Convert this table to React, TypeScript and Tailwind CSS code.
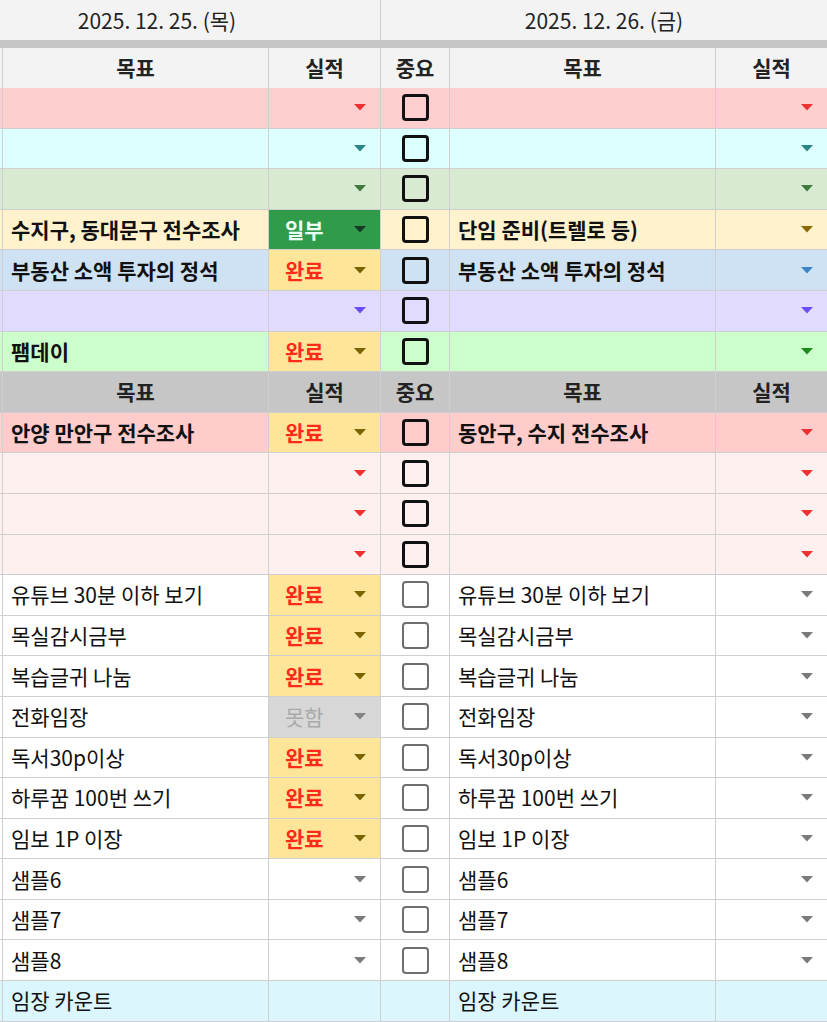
import React from "react";

type Status = "" | "완료" | "일부" | "못함";

type Row = {
  bg: string;
  arrow: string;
  bold?: boolean;
  box?: "dark" | "light" | "none";
  left: string;
  leftStatus?: Status;
  right: string;
  noArrow?: boolean;
};

const top: Row[] = [
  { bg: "bg-[#ffcfcf]", arrow: "text-[#ee3030]", bold: true, box: "dark", left: "", right: "" },
  { bg: "bg-[#dcffff]", arrow: "text-[#2d8686]", bold: true, box: "dark", left: "", right: "" },
  { bg: "bg-[#d9ead3]", arrow: "text-[#3f7a3f]", bold: true, box: "dark", left: "", right: "" },
  {
    bg: "bg-[#fff2cc]",
    arrow: "text-[#8a6a00]",
    bold: true,
    box: "dark",
    left: "수지구, 동대문구 전수조사",
    leftStatus: "일부",
    right: "단임 준비(트렐로 등)",
  },
  {
    bg: "bg-[#cfe2f3]",
    arrow: "text-[#3d85c6]",
    bold: true,
    box: "dark",
    left: "부동산 소액 투자의 정석",
    leftStatus: "완료",
    right: "부동산 소액 투자의 정석",
  },
  { bg: "bg-[#e1dcff]", arrow: "text-[#6a4fff]", bold: true, box: "dark", left: "", right: "" },
  {
    bg: "bg-[#ccffcc]",
    arrow: "text-[#1e8a1e]",
    bold: true,
    box: "dark",
    left: "팸데이",
    leftStatus: "완료",
    right: "",
  },
];

const middle: Row[] = [
  {
    bg: "bg-[#ffcccc]",
    arrow: "text-[#ee3030]",
    bold: true,
    box: "dark",
    left: "안양 만안구 전수조사",
    leftStatus: "완료",
    right: "동안구, 수지 전수조사",
  },
  { bg: "bg-[#fff0f0]", arrow: "text-[#ee3030]", bold: true, box: "dark", left: "", right: "" },
  { bg: "bg-[#fff0f0]", arrow: "text-[#ee3030]", bold: true, box: "dark", left: "", right: "" },
  { bg: "bg-[#fff0f0]", arrow: "text-[#ee3030]", bold: true, box: "dark", left: "", right: "" },
];

const habits: [string, Status][] = [
  ["유튜브 30분 이하 보기", "완료"],
  ["목실감시금부", "완료"],
  ["복습글귀 나눔", "완료"],
  ["전화임장", "못함"],
  ["독서30p이상", "완료"],
  ["하루꿈 100번 쓰기", "완료"],
  ["임보 1P 이장", "완료"],
  ["샘플6", ""],
  ["샘플7", ""],
  ["샘플8", ""],
];

const bottom: Row[] = [
  ...habits.map(
    ([t, s]): Row => ({
      bg: "bg-white",
      arrow: "text-[#7a7a7a]",
      box: "light",
      left: t,
      leftStatus: s,
      right: t,
    })
  ),
  {
    bg: "bg-[#dcf6fd]",
    arrow: "",
    box: "none",
    left: "임장 카운트",
    right: "임장 카운트",
    noArrow: true,
  },
];

const cell = "h-full shrink-0 border-r border-b border-[#cfcfcf] flex items-center";

const Arrow = ({ color }: { color: string }) => (
  <svg width="12" height="7" viewBox="0 0 12 7" className={`ml-auto mr-[14px] ${color}`}>
    <path d="M0 0 H12 L6 6.5 Z" fill="currentColor" />
  </svg>
);

const Box = ({ kind }: { kind: Row["box"] }) => {
  if (kind === "none") return null;
  return kind === "dark" ? (
    <div className="h-[27px] w-[27px] rounded-[4px] border-[3px] border-[#111]" />
  ) : (
    <div className="h-[27px] w-[27px] rounded-[4px] border-[2.5px] border-[#6e6e6e]" />
  );
};

const StatusCell = ({ status, row }: { status?: Status; row: Row }) => {
  if (status === "완료")
    return (
      <div className={`${cell} w-[112px] bg-[#ffe599] pl-[16px]`}>
        <span className="font-bold text-[#ff2a1a]">완료</span>
        <Arrow color="text-[#7d6200]" />
      </div>
    );
  if (status === "일부")
    return (
      <div className={`${cell} w-[112px] bg-[#2f9b4b] pl-[16px]`}>
        <span className="font-bold text-[#ecfff4]">일부</span>
        <Arrow color="text-[#173a22]" />
      </div>
    );
  if (status === "못함")
    return (
      <div className={`${cell} w-[112px] bg-[#d7d7d7] pl-[16px]`}>
        <span className="text-[#a9a9a9]">못함</span>
        <Arrow color="text-[#838383]" />
      </div>
    );
  return (
    <div className={`${cell} w-[112px] ${row.bg}`}>
      {!row.noArrow && <Arrow color={row.arrow} />}
    </div>
  );
};

const DataRow = ({ row }: { row: Row }) => (
  <div className={`flex h-[40.6px] ${row.bold ? "font-bold" : ""}`}>
    {/* first day's 중요 column, scrolled mostly out of view */}
    <div className={`${cell} w-[69px] justify-center ${row.bg}`}>
      <Box kind={row.box} />
    </div>
    <div className={`${cell} w-[266px] pl-[8px] text-[#111] ${row.bg}`}>{row.left}</div>
    <StatusCell status={row.leftStatus} row={row} />
    <div className={`${cell} w-[69px] justify-center ${row.bg}`}>
      <Box kind={row.box} />
    </div>
    <div className={`${cell} w-[266px] pl-[8px] text-[#111] ${row.bg}`}>{row.right}</div>
    <StatusCell row={row} />
  </div>
);

const HeaderRow = ({ bg }: { bg: string }) => (
  <div className={`flex h-[40.6px] font-bold text-[#222] ${bg}`}>
    <div className={`${cell} w-[69px]`} />
    <div className={`${cell} w-[266px] justify-center`}>목표</div>
    <div className={`${cell} w-[112px] justify-center`}>실적</div>
    <div className={`${cell} w-[69px] justify-center`}>중요</div>
    <div className={`${cell} w-[266px] justify-center`}>목표</div>
    <div className={`${cell} w-[112px] justify-center`}>실적</div>
  </div>
);

export default function App() {
  return (
    <div
      className="h-[1022px] w-[827px] overflow-hidden bg-white text-[21px] leading-none"
      style={{ fontFamily: '"Noto Sans CJK KR", "Noto Sans", sans-serif' }}
    >
      <div className="-ml-[66px] w-[900px]">
        <div className="flex h-[40px] bg-[#f3f3f3] text-[21px] text-[#222]">
          <div className="flex w-[447px] items-center justify-center border-r border-[#cfcfcf]">
            2025. 12. 25. (목)
          </div>
          <div className="flex w-[447px] items-center justify-center border-r border-[#cfcfcf]">
            2025. 12. 26. (금)
          </div>
        </div>
        <div className="h-[8px] bg-[#c6c6c6]" />
        <div className="h-[40px]">
          <HeaderRow bg="bg-[#f3f3f3]" />
        </div>
        {top.map((r, i) => (
          <DataRow key={`t${i}`} row={r} />
        ))}
        <HeaderRow bg="bg-[#c6c6c6]" />
        {middle.map((r, i) => (
          <DataRow key={`m${i}`} row={r} />
        ))}
        {bottom.map((r, i) => (
          <DataRow key={`b${i}`} row={r} />
        ))}
      </div>
    </div>
  );
}
